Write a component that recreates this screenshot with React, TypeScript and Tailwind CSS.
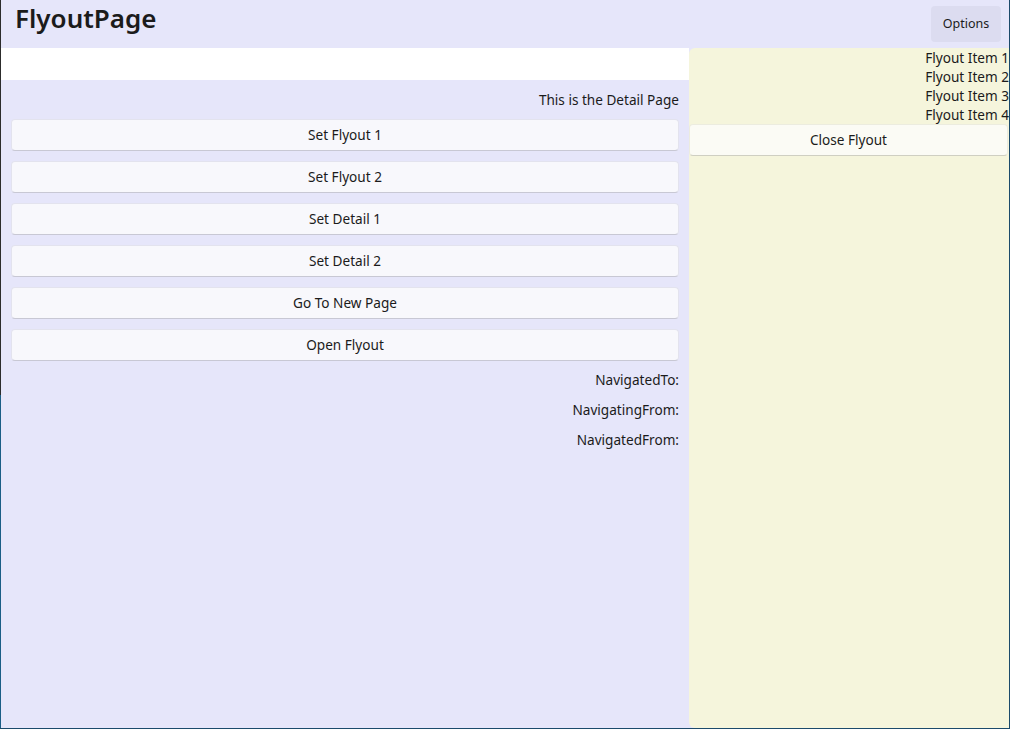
import React from "react";

const font = { fontFamily: '"Noto Sans", "Open Sans", sans-serif' };

function Btn({ label }: { label: string }) {
  return (
    <div className="h-[32px] flex items-center justify-center rounded-[4px] bg-[#f8f8fc] border border-[#e3e3ee] border-b-[#c8c8d4] text-[13.6px] text-[#1b1b1b]">
      {label}
    </div>
  );
}

export default function App() {
  const buttons = ["Set Flyout 1", "Set Flyout 2", "Set Detail 1", "Set Detail 2", "Go To New Page", "Open Flyout"];
  return (
    <div className="w-[1010px] h-[729px] flex flex-col bg-[#e6e6fa] overflow-hidden" style={font}>
      <div className="flex flex-1 min-h-0">
        <div className="w-[1px] flex flex-col">
          <div className="h-[395px] bg-[#2c2c2c]" />
          <div className="flex-1 bg-[#1b5e86]" />
        </div>
        <div className="flex-1 flex flex-col min-w-0">
          <div className="h-[48px] flex items-start justify-between">
            <div className="pl-[14px] pt-[1px] text-[26px] leading-[34px] font-semibold text-[#1b1b1b]">FlyoutPage</div>
            <div className="mt-[6px] mr-[8px] w-[70px] h-[36px] pt-[1px] rounded-[4px] bg-[#dcdcf0] flex items-center justify-center text-[12.5px] text-[#1b1b1b]">
              Options
            </div>
          </div>
          <div className="flex flex-1 min-h-0">
            <div className="w-[688px] flex flex-col">
              <div className="h-[32px] bg-white" />
              <div className="flex-1 px-[10px] pt-[10px] flex flex-col text-[13.6px] text-[#1b1b1b]">
                <div className="text-right leading-[20px] h-[20px]">This is the Detail Page</div>
                <div className="flex flex-col gap-[10px] mt-[9px]">
                  {buttons.map((b) => (
                    <Btn key={b} label={b} />
                  ))}
                </div>
                <div className="flex flex-col gap-[10px] mt-[9px] text-right leading-[20px]">
                  <div>NavigatedTo:</div>
                  <div>NavigatingFrom:</div>
                  <div>NavigatedFrom:</div>
                </div>
              </div>
            </div>
            <div className="w-[320px] bg-[#f5f5dc] rounded-tl-[6px] rounded-bl-[6px] flex flex-col text-[13.6px] text-[#1b1b1b]">
              <div className="flex flex-col items-end leading-[19px]">
                <div>Flyout Item 1</div>
                <div>Flyout Item 2</div>
                <div>Flyout Item 3</div>
                <div>Flyout Item 4</div>
              </div>
              <div className="h-[32px] mr-[1px] flex items-center justify-center rounded-[4px] bg-[#fbfbf5] border border-[#ececdf] border-b-[#cfcfc2]">
                Close Flyout
              </div>
            </div>
          </div>
        </div>
        <div className="w-[1px] bg-[#1b4a6b]" />
      </div>
      <div className="h-[1px] bg-[#1b4a6b]" />
    </div>
  );
}
